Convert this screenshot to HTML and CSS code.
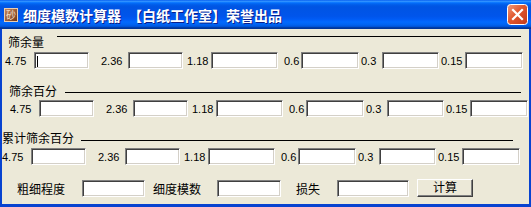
FILE: index.html
```html
<!DOCTYPE html>
<html lang="zh-CN">

<head>
  <meta charset="UTF-8" />
  <title>细度模数计算器</title>
  <link rel="stylesheet" href="styles.css">
</head>

<body>
  <div class="window">
    <div class="titlebar">
      <svg class="app-icon" viewBox="0 0 14 14">
        <defs>
          <linearGradient id="ig" x1="0" y1="0" x2="1" y2="1">
            <stop offset="0" stop-color="#c98a5e" />
            <stop offset="1" stop-color="#6a3418" />
          </linearGradient>
        </defs>
        <rect x="0.5" y="0.5" width="13" height="13" fill="url(#ig)" stroke="#e9cdb0" />
        <text x="7" y="11" font-size="10" text-anchor="middle" fill="#f2dcc4" font-family="Noto Sans CJK SC, sans-serif">砂</text>
      </svg>
      <span class="title">细度模数计算器&ensp;【白纸工作室】荣誉出品</span>
      <svg class="close-btn" viewBox="0 0 21 21">
        <defs>
          <linearGradient id="cg" x1="0" y1="0" x2="1" y2="1">
            <stop offset="0" stop-color="#f19c7d" />
            <stop offset="0.45" stop-color="#e0572f" />
            <stop offset="1" stop-color="#c1391a" />
          </linearGradient>
        </defs>
        <rect x="0.5" y="0.5" width="20" height="20" rx="3" fill="url(#cg)" stroke="#fff" />
        <path d="M6 6 L15 15 M15 6 L6 15" stroke="#fff" stroke-width="2.2" stroke-linecap="square" />
      </svg>
    </div>

    <div class="client">
      <!-- 筛余量 -->
      <div class="head head-1"><span>筛余量</span><i class="rule"></i></div>
      <div class="sieve-row row-1">
        <label class="f"><span>4.75</span><span class="caret-wrap"><input class="box" type="text"></span></label>
        <label class="f"><span>2.36</span><input class="box" type="text"></label>
        <label class="f"><span>1.18</span><input class="box" type="text"></label>
        <label class="f"><span>0.6</span><input class="box" type="text"></label>
        <label class="f"><span>0.3</span><input class="box" type="text"></label>
        <label class="f"><span>0.15</span><input class="box" type="text"></label>
      </div>

      <!-- 筛余百分 -->
      <div class="head head-2"><span>筛余百分</span><i class="rule"></i></div>
      <div class="sieve-row row-2">
        <label class="f"><span>4.75</span><input class="box" type="text"></label>
        <label class="f"><span>2.36</span><input class="box" type="text"></label>
        <label class="f"><span>1.18</span><input class="box" type="text"></label>
        <label class="f"><span>0.6</span><input class="box" type="text"></label>
        <label class="f"><span>0.3</span><input class="box" type="text"></label>
        <label class="f"><span>0.15</span><input class="box" type="text"></label>
      </div>

      <!-- 累计筛余百分 -->
      <div class="head head-3"><span>累计筛余百分</span><i class="rule"></i></div>
      <div class="sieve-row row-3">
        <label class="f"><span>4.75</span><input class="box" type="text"></label>
        <label class="f"><span>2.36</span><input class="box" type="text"></label>
        <label class="f"><span>1.18</span><input class="box" type="text"></label>
        <label class="f"><span>0.6</span><input class="box" type="text"></label>
        <label class="f"><span>0.3</span><input class="box" type="text"></label>
        <label class="f"><span>0.15</span><input class="box" type="text"></label>
      </div>

      <!-- 结果 -->
      <div class="summary">
        <span class="s-label s-1">粗细程度</span><input class="box s-box-1" type="text">
        <span class="s-label s-2">细度模数</span><input class="box s-box-2" type="text">
        <span class="s-label s-3">损失</span><input class="box s-box-3" type="text">
        <button class="calc" type="button">计算</button>
      </div>
    </div>
  </div>
</body>

</html>
```

FILE: styles.css
```css
* {
  margin: 0;
  padding: 0;
  box-sizing: border-box;
}

body {
  width: 531px;
  height: 207px;
  overflow: hidden;
  font-family: "Liberation Sans", "Noto Sans CJK SC", sans-serif;
  font-size: 11px;
  color: #000;
}

.window {
  width: 531px;
  height: 207px;
  display: flex;
  flex-direction: column;
}

/* 标题栏 */
.titlebar {
  height: 29px;
  display: flex;
  align-items: center;
  background: linear-gradient(to bottom, #0058ee 0%, #3593ff 4%, #288eff 6%, #127dff 8%, #036ffc 10%, #0262ee 14%, #0057e5 20%, #0054e3 24%, #0055eb 56%, #005bf5 66%, #026afe 76%, #0062ef 86%, #0052d6 92%, #0040ab 94%, #003092 100%);
}

.app-icon {
  width: 14px;
  height: 14px;
  margin-left: 4px;
  margin-top: 1px;
}

.title {
  flex: 1;
  margin-left: 5px;
  font: bold 14px "Noto Sans CJK SC", sans-serif;
  line-height: 16px;
  color: #fff;
  text-shadow: 1px 1px #0a1e8c;
  white-space: nowrap;
}

.close-btn {
  width: 21px;
  height: 21px;
  margin-right: 3px;
}

/* 窗体 */
.client {
  flex: 1;
  background: #ece9d8;
  border: 0 solid #0843d0;
  border-width: 0 2px 3px;
  padding-top: 7px;
}

.head {
  display: flex;
  height: 14px;
  line-height: 14px;
  font-size: 12px;
}

.head .rule {
  flex: 1;
  height: 0;
  border-top: 1px solid #000;
}

.head-1 {
  padding-left: 6px;
}

.head-1 .rule {
  margin: 0 8px 0 13px;
}

.head-2 {
  margin-top: 16px;
  padding-left: 7px;
}

.head-2 .rule {
  margin: 7px 8px 0 8px;
}

.head-3 {
  margin-top: 15px;
}

.head-3 .rule {
  margin: 8px 16px 0 7px;
}

.sieve-row {
  display: flex;
  align-items: center;
  height: 17px;
}

.row-1 {
  margin-top: 2px;
  padding-left: 3px;
}

.row-2 {
  margin-top: 1px;
  padding-left: 8px;
}

.row-3 {
  margin-top: 2px;
}

.f {
  display: flex;
  align-items: center;
}

.box {
  display: block;
  height: 17px;
  background: #fff;
  border: 1px solid;
  border-color: #808080 #fff #fff #808080;
  box-shadow: inset 1px 1px #404040, inset -1px -1px #d4d0c8;
  outline: none;
}

/* 各档筛孔 标签宽 / 输入框宽 / 间距 */
.f:nth-child(1) span:first-child { width: 29px; }
.f:nth-child(1) .box { width: 55px; }
.f:nth-child(1) { margin-right: 12px; }

.f:nth-child(2) span { width: 27px; }
.f:nth-child(2) .box { width: 55px; }
.f:nth-child(2) { margin-right: 4px; }

.f:nth-child(3) span { width: 24px; }
.f:nth-child(3) .box { width: 67px; }
.f:nth-child(3) { margin-right: 6px; }

.f:nth-child(4) span { width: 17px; }
.f:nth-child(4) .box { width: 58px; }
.f:nth-child(4) { margin-right: 2px; }

.f:nth-child(5) span { width: 21px; }
.f:nth-child(5) .box { width: 57px; }
.f:nth-child(5) { margin-right: 2px; }

.f:nth-child(6) span { width: 24px; }
.f:nth-child(6) .box { width: 58px; }

.caret-wrap {
  position: relative;
}

.caret-wrap::after {
  content: "";
  position: absolute;
  left: 3px;
  top: 4px;
  width: 1px;
  height: 11px;
  background: #000;
}

/* 结果行 */
.summary {
  display: flex;
  align-items: center;
  height: 17px;
  margin-top: 15px;
  padding-left: 15px;
  font-size: 12px;
}

.s-1 { width: 65px; }
.s-box-1 { width: 63px; margin-right: 8px; }
.s-2 { width: 64px; }
.s-box-2 { width: 64px; margin-right: 15px; }
.s-3 { width: 41px; }
.s-box-3 { width: 72px; margin-right: 8px; }

.calc {
  width: 56px;
  height: 18px;
  margin-top: -2px;
  font: 12px "Liberation Sans", "Noto Sans CJK SC", sans-serif;
  line-height: 14px;
  background: #ece9d8;
  border: 1px solid;
  border-color: #fff #404040 #404040 #fff;
  box-shadow: inset -1px -1px #808080;
}
```
